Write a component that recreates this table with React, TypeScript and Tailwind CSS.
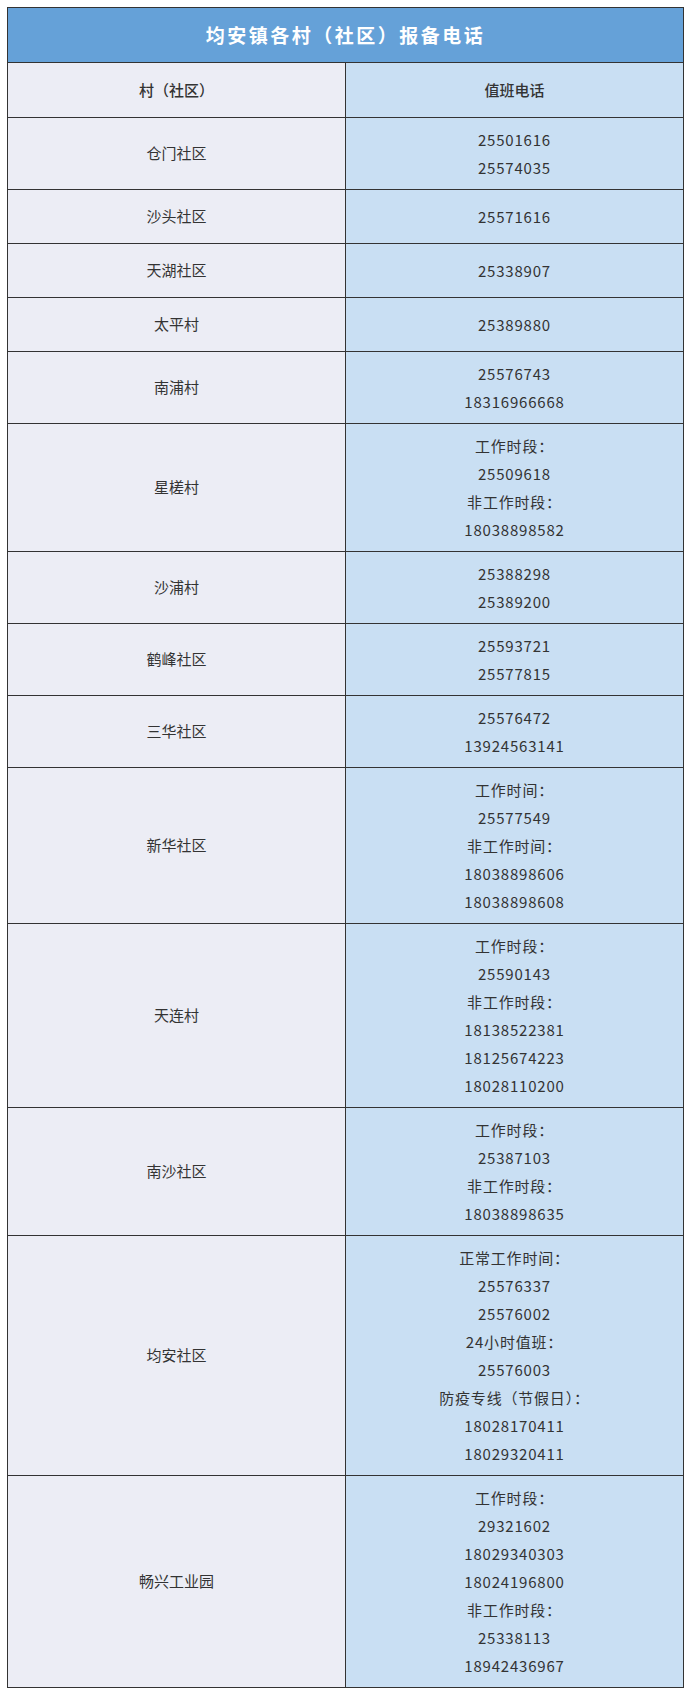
import React from 'react'

type Row = { name: string; lines: string[] }

const ROWS: Row[] = [
  { name: '仓门社区', lines: ['25501616', '25574035'] },
  { name: '沙头社区', lines: ['25571616'] },
  { name: '天湖社区', lines: ['25338907'] },
  { name: '太平村', lines: ['25389880'] },
  { name: '南浦村', lines: ['25576743', '18316966668'] },
  { name: '星槎村', lines: ['工作时段：', '25509618', '非工作时段：', '18038898582'] },
  { name: '沙浦村', lines: ['25388298', '25389200'] },
  { name: '鹤峰社区', lines: ['25593721', '25577815'] },
  { name: '三华社区', lines: ['25576472', '13924563141'] },
  { name: '新华社区', lines: ['工作时间：', '25577549', '非工作时间：', '18038898606', '18038898608'] },
  { name: '天连村', lines: ['工作时段：', '25590143', '非工作时段：', '18138522381', '18125674223', '18028110200'] },
  { name: '南沙社区', lines: ['工作时段：', '25387103', '非工作时段：', '18038898635'] },
  {
    name: '均安社区',
    lines: ['正常工作时间：', '25576337', '25576002', '24小时值班：', '25576003', '防疫专线（节假日）：', '18028170411', '18029320411'],
  },
  {
    name: '畅兴工业园',
    lines: ['工作时段：', '29321602', '18029340303', '18024196800', '非工作时段：', '25338113', '18942436967'],
  },
]

const font = { fontFamily: '"Noto Sans CJK SC", "Noto Sans", sans-serif' }

const App: React.FC = () => {
  return (
    <div className="bg-white px-[7px] pt-[7px] pb-[11px] text-[#333]" style={font}>
      <table className="w-[677px] border-collapse text-center">
        <tbody>
          <tr className="h-[55px]">
            <td
              colSpan={2}
              className="border border-[#333] bg-[#65a1d8] text-[19px] font-bold tracking-[2.5px] text-white"
            >
              均安镇各村（社区）报备电话
            </td>
          </tr>
          <tr className="h-[55px]">
            <td className="w-1/2 border border-[#333] bg-[#ecedf5] text-[15px] font-medium">村（社区）</td>
            <td className="w-1/2 border border-[#333] bg-[#c9dff3] text-[15px] font-medium">值班电话</td>
          </tr>
          {ROWS.map((r) => (
            <tr key={r.name} className="h-[54px]">
              <td className="border border-[#333] bg-[#ecedf5] text-[15px]">{r.name}</td>
              <td className="border border-[#333] bg-[#c9dff3] py-[7.5px] text-[15px] leading-[28px] tracking-[0.8px]">
                {r.lines.map((l, i) => (
                  <div key={i}>{l}</div>
                ))}
              </td>
            </tr>
          ))}
        </tbody>
      </table>
    </div>
  )
}

export default App
